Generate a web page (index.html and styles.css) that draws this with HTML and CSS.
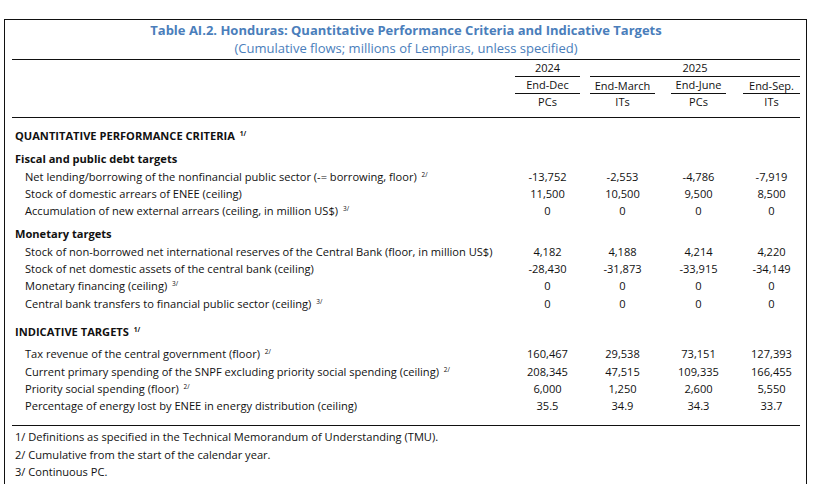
FILE: index.html
```html
<!DOCTYPE html>
<html>
<head>
<meta charset="utf-8">
<link rel="stylesheet" href="styles.css">
</head>
<body>
<div class="frame">
  <div class="caption">
    <div class="title">Table AI.2. Honduras: Quantitative Performance Criteria and Indicative Targets</div>
    <div class="subtitle">(Cumulative flows; millions of Lempiras, unless specified)</div>
  </div>
  <div class="thead">
    <div class="hrow">
      <div class="label"></div>
      <div class="h c1 ul">2024</div>
      <div class="h span ul">2025</div>
    </div>
    <div class="hrow">
      <div class="label"></div>
      <div class="h c1 ul">End-Dec</div>
      <div class="h c2 ul low">End-March</div>
      <div class="h c3 ul">End-June</div>
      <div class="h c4 ul low">End-Sep.</div>
    </div>
    <div class="hrow">
      <div class="label"></div>
      <div class="h c1">PCs</div>
      <div class="h c2">ITs</div>
      <div class="h c3">PCs</div>
      <div class="h c4">ITs</div>
    </div>
  </div>
  <div class="tbody">
    <div class="row sec first"><div class="label caps">QUANTITATIVE PERFORMANCE CRITERIA <sup>1/</sup></div></div>
    <div class="row sub"><div class="label bold">Fiscal and public debt targets</div></div>
    <div class="row"><div class="label item">Net lending/borrowing of the nonfinancial public sector (-= borrowing, floor) <sup>2/</sup></div><div class="v c1">-13,752</div><div class="v c2">-2,553</div><div class="v c3">-4,786</div><div class="v c4">-7,919</div></div>
    <div class="row"><div class="label item">Stock of domestic arrears of ENEE (ceiling)</div><div class="v c1">11,500</div><div class="v c2">10,500</div><div class="v c3">9,500</div><div class="v c4">8,500</div></div>
    <div class="row"><div class="label item">Accumulation of new external arrears (ceiling, in million US$) <sup>3/</sup></div><div class="v c1">0</div><div class="v c2">0</div><div class="v c3">0</div><div class="v c4">0</div></div>
    <div class="row sub"><div class="label bold">Monetary targets</div></div>
    <div class="row"><div class="label item">Stock of non-borrowed net international reserves of the Central Bank (floor, in million US$)</div><div class="v c1">4,182</div><div class="v c2">4,188</div><div class="v c3">4,214</div><div class="v c4">4,220</div></div>
    <div class="row"><div class="label item">Stock of net domestic assets of the central bank (ceiling)</div><div class="v c1">-28,430</div><div class="v c2">-31,873</div><div class="v c3">-33,915</div><div class="v c4">-34,149</div></div>
    <div class="row"><div class="label item">Monetary financing (ceiling) <sup>3/</sup></div><div class="v c1">0</div><div class="v c2">0</div><div class="v c3">0</div><div class="v c4">0</div></div>
    <div class="row"><div class="label item">Central bank transfers to financial public sector (ceiling) <sup>3/</sup></div><div class="v c1">0</div><div class="v c2">0</div><div class="v c3">0</div><div class="v c4">0</div></div>
    <div class="row sec2"><div class="label caps">INDICATIVE TARGETS <sup>1/</sup></div></div>
    <div class="row after"><div class="label item">Tax revenue of the central government (floor) <sup>2/</sup></div><div class="v c1">160,467</div><div class="v c2">29,538</div><div class="v c3">73,151</div><div class="v c4">127,393</div></div>
    <div class="row"><div class="label item">Current primary spending of the SNPF excluding priority social spending (ceiling) <sup>2/</sup></div><div class="v c1">208,345</div><div class="v c2">47,515</div><div class="v c3">109,335</div><div class="v c4">166,455</div></div>
    <div class="row"><div class="label item">Priority social spending (floor) <sup>2/</sup></div><div class="v c1">6,000</div><div class="v c2">1,250</div><div class="v c3">2,600</div><div class="v c4">5,550</div></div>
    <div class="row"><div class="label item">Percentage of energy lost by ENEE in energy distribution (ceiling)</div><div class="v c1">35.5</div><div class="v c2">34.9</div><div class="v c3">34.3</div><div class="v c4">33.7</div></div>
  </div>
  <div class="notes">
    <div class="note">1/ Definitions as specified in the Technical Memorandum of Understanding (TMU).</div>
    <div class="note">2/ Cumulative from the start of the calendar year.</div>
    <div class="note">3/ Continuous PC.</div>
  </div>
</div>
</body>
</html>
```

FILE: styles.css
```css
html, body {
  margin: 0;
  padding: 0;
  background: #ffffff;
}
body {
  font-family: "Open Sans", "Lato", "Liberation Sans", sans-serif;
  font-size: 11.1px;
  color: #111111;
}
.frame {
  margin: 19px 0 0 4px;
  width: 788px;
  border: 1px solid #111111;
  padding: 0 6px 60px 7px;
}
.caption {
  text-align: center;
  color: #4a7ebb;
  padding: 1px 0 2px 0;
}
.title {
  font-weight: bold;
  font-size: 13px;
  line-height: 18px;
}
.subtitle {
  font-size: 13px;
  line-height: 18px;
}
.thead {
  border-top: 1px solid #111111;
  border-bottom: 1px solid #111111;
  padding-bottom: 7px;
  font-size: 11px;
}
.hrow {
  display: flex;
  align-items: flex-end;
}
.hrow .label {
  width: 503px;
}
.h {
  text-align: center;
  line-height: 16px;
}
.ul {
  border-bottom: 1px solid #111111;
}
.low {
  padding-top: 2px;
  line-height: 14px;
}
.c1 { width: 65px; }
.c2 { width: 65px; margin-left: 10px; }
.c3 { width: 55px; margin-left: 16px; }
.c4 { width: 57px; margin-left: 17px; }
.span { width: 210px; margin-left: 10px; }
.tbody {
  padding-top: 9px;
}
.row {
  display: flex;
  height: 17.3px;
  line-height: 17.3px;
  white-space: nowrap;
}
.row .label {
  width: 503px;
  padding-left: 3px;
  box-sizing: border-box;
}
.row .label.item {
  padding-left: 13px;
}
.bold, .caps {
  font-weight: bold;
}
.sub {
  margin-top: 6px;
}
.sec2 {
  margin-top: 11px;
}
.after {
  margin-top: 5px;
}
.v {
  text-align: center;
}
sup {
  font-size: 6.5px;
  line-height: 0;
  vertical-align: 4px;
  margin-left: 2px;
}
.notes {
  border-top: 1px solid #111111;
  margin-top: 11px;
  padding-top: 2px;
}
.note {
  height: 17.3px;
  line-height: 17.3px;
  padding-left: 3px;
}
```
